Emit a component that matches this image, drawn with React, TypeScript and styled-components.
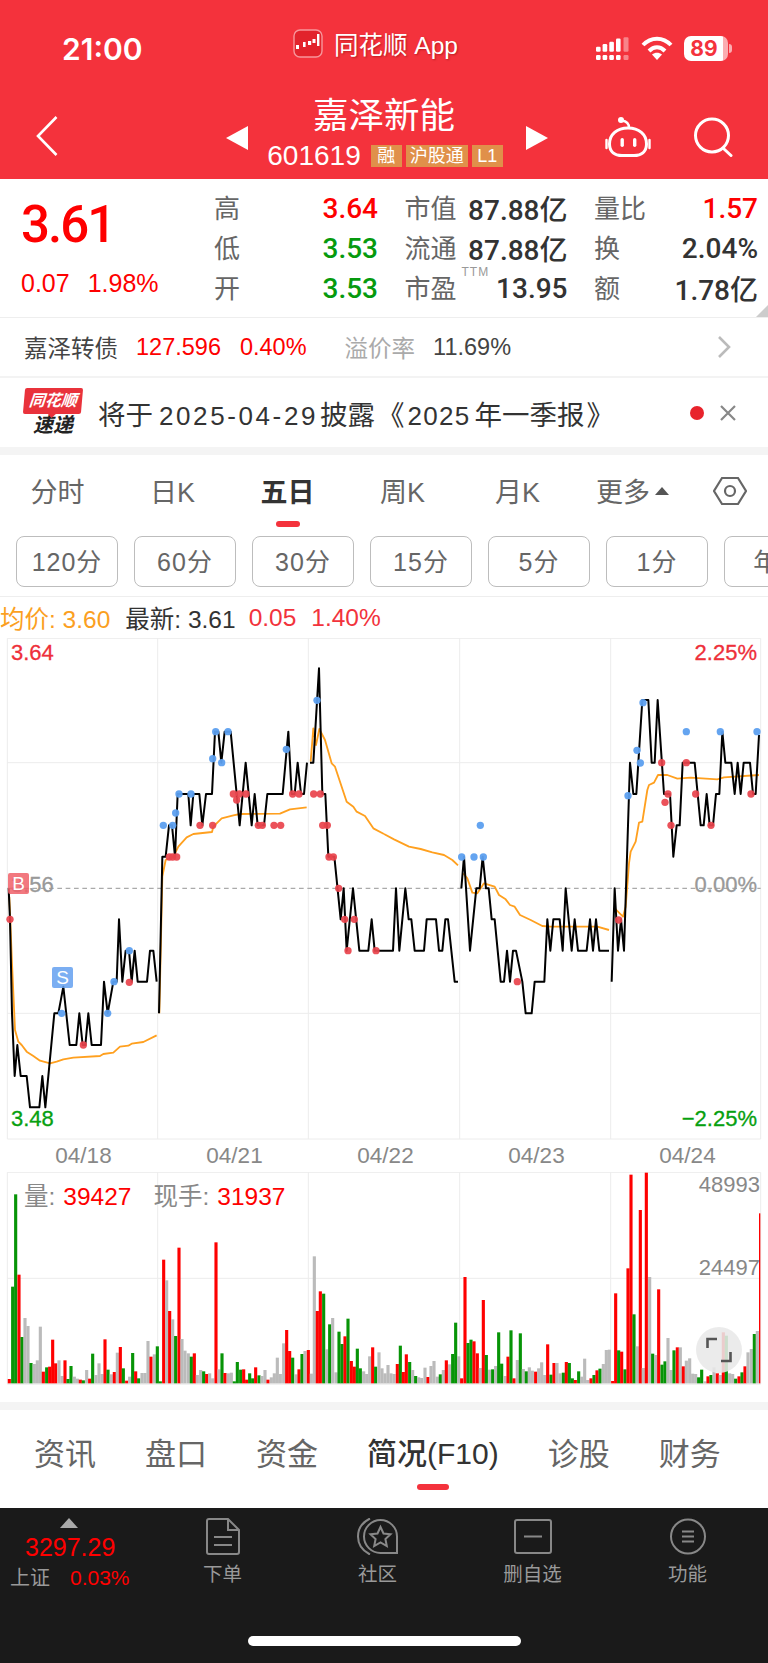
import React from 'react';
import styled, { createGlobalStyle } from 'styled-components';

const RED = '#f4323c';
const UP = '#fe0000';
const DOWN = '#069a0e';
const SANS = '"Liberation Sans", "Noto Sans CJK SC", sans-serif';

const GlobalStyle = createGlobalStyle`
  html, body {
    margin: 0;
    padding: 0;
    background: #fff;
  }
  body {
    font-family: ${SANS};
  }
`;

const Page = styled.div`
  width: 768px;
  height: 1663px;
  overflow: hidden;
  display: flex;
  flex-direction: column;
  background: #fff;
`;

/* ---------- red header ---------- */
const Header = styled.header`
  height: 179px;
  flex: none;
  background: ${RED};
  color: #fff;
  display: flex;
  flex-direction: column;
`;

const StatusBar = styled.div`
  height: 90px;
  display: grid;
  grid-template-columns: 293px 303px 1fr;
  align-items: center;
`;

const Time = styled.div`
  padding: 7px 0 0 62px;
  font-family: Inter, ${SANS};
  font-size: 30px;
  font-weight: 600;
`;

const AppName = styled.div`
  display: flex;
  align-items: center;
  gap: 11px;
  font-size: 24.5px;
  padding-bottom: 4px;
  text-shadow: 1px 1px 2px rgba(120, 0, 0, 0.45);
`;

const StatusIcons = styled.div`
  display: flex;
  align-items: center;
  padding-top: 6px;
`;

const Battery = styled.div`
  position: relative;
  width: 44px;
  height: 25px;
  margin-left: 11px;
  border-radius: 7px;
  background: linear-gradient(90deg, #fff 89%, rgba(255, 255, 255, 0.6) 89%);
  color: ${RED};
  font-family: Inter, ${SANS};
  font-size: 21px;
  font-weight: 700;
  line-height: 25px;
  text-align: center;
  padding-right: 4px;
  box-sizing: border-box;

  &::after {
    content: '';
    position: absolute;
    right: -4px;
    top: 8px;
    width: 3px;
    height: 9px;
    border-radius: 0 3px 3px 0;
    background: rgba(255, 255, 255, 0.6);
  }
`;

const NavRow = styled.div`
  flex: 1;
  display: grid;
  grid-template-columns: 226px 322px 1fr;
  align-items: center;
`;

const BackButton = styled.div`
  padding: 2px 0 0 36px;
  display: flex;
`;

const NavCenter = styled.div`
  display: flex;
  align-items: center;
  justify-content: space-between;
`;

const Arrow = styled.div<{ $dir: 'left' | 'right' }>`
  width: 0;
  height: 0;
  margin-top: 6px;
  border-top: 12px solid transparent;
  border-bottom: 12px solid transparent;
  ${(p) => (p.$dir === 'left' ? 'border-right: 22px solid #fff;' : 'border-left: 22px solid #fff;')}
`;

const TitleBlock = styled.div`
  display: flex;
  flex-direction: column;
  align-items: center;
  margin-right: 4px;
`;

const Title = styled.div`
  font-size: 35.5px;
  line-height: 44px;
  margin: -4px 0 3px -2px;
`;

const CodeRow = styled.div`
  display: flex;
  align-items: center;
  gap: 4px;
  font-size: 28px;
  line-height: 30px;
`;

const Code = styled.span`
  margin-right: 6px;
`;

const Tag = styled.span`
  height: 22px;
  min-width: 31px;
  box-sizing: border-box;
  padding: 0 4px;
  background: #e0904a;
  color: #fff;
  font-size: 18px;
  line-height: 22px;
  text-align: center;
`;

const NavIcons = styled.div`
  display: flex;
  align-items: center;
  gap: 41px;
  padding: 4px 0 0 57px;
`;

/* ---------- quote panel ---------- */
const Quote = styled.section`
  position: relative;
  height: 138px;
  flex: none;
  display: flex;
  border-bottom: 1px solid #eee;
`;

const PriceBox = styled.div`
  width: 214px;
  flex: none;
  padding: 19px 0 0 21px;
  box-sizing: border-box;
  color: ${UP};
`;

const BigPrice = styled.div`
  font-family: Roboto, ${SANS};
  font-size: 51px;
  font-weight: 500;
  line-height: 54px;
  letter-spacing: -2px;
`;

const PriceChange = styled.div`
  display: flex;
  gap: 18px;
  margin-top: 16px;
  font-size: 25px;
  line-height: 30px;
`;

const StatGrid = styled.div`
  flex: 1;
  display: grid;
  grid-template-columns: 164px 163px 164px;
  grid-auto-rows: 40px;
  column-gap: 26.5px;
  padding-top: 9px;
`;

const Stat = styled.div`
  display: flex;
  align-items: center;
  justify-content: space-between;
`;

const StatLabel = styled.span`
  position: relative;
  top: -2px;
  font-size: 26px;
  color: #666;
`;

const Ttm = styled.sup`
  position: absolute;
  left: 57px;
  top: -3px;
  font-size: 12px;
  letter-spacing: 1px;
  color: #999;
`;

const StatValue = styled.span<{ $color?: string }>`
  font-family: Roboto, ${SANS};
  font-weight: 500;
  font-size: 28px;
  color: ${(p) => p.$color || '#333'};
`;

const CornerMark = styled.div`
  position: absolute;
  right: 0;
  bottom: 0;
  width: 0;
  height: 0;
  border-left: 12px solid transparent;
  border-bottom: 12px solid #ccc;
`;

/* ---------- bond + news ---------- */
const BondRow = styled.div`
  height: 58px;
  flex: none;
  display: flex;
  align-items: center;
  padding: 0 37px 0 24px;
  font-size: 23.5px;
  color: #444;
  border-bottom: 2px solid #f3f3f3;
`;

const BondText = styled.span<{ $color?: string; $gap?: number }>`
  color: ${(p) => p.$color || 'inherit'};
  margin-left: ${(p) => p.$gap || 0}px;
`;

const ChevronRight = styled.svg`
  margin-left: auto;
`;

const NewsRow = styled.div`
  height: 69px;
  flex: none;
  display: flex;
  align-items: center;
  padding: 0 31px 0 24px;
  border-bottom: 8px solid #f4f4f4;
`;

const NewsLogo = styled.div`
  width: 58px;
  flex: none;
  display: flex;
  flex-direction: column;
  align-items: center;
`;

const NewsFlag = styled.div`
  position: relative;
  width: 58px;
  height: 26px;
  background: #e9323b;
  border-radius: 2px;
  transform: skewX(-5deg);
  color: #fff;
  font-size: 16px;
  font-weight: 700;
  font-style: italic;
  line-height: 26px;
  text-align: center;

  &::after {
    content: '';
    position: absolute;
    left: 25px;
    bottom: -4px;
    width: 0;
    height: 0;
    border-left: 4px solid transparent;
    border-right: 4px solid transparent;
    border-top: 4px solid #e9323b;
  }
`;

const NewsSub = styled.div`
  font-size: 20px;
  font-weight: 700;
  font-style: italic;
  line-height: 23px;
  color: #222;
`;

const NewsText = styled.div`
  flex: 1;
  display: flex;
  align-items: baseline;
  margin-left: 16px;
  font-size: 27.5px;
  color: #333;
  white-space: nowrap;
`;

const NewsNumber = styled.span<{ $track: number; $left: number; $right: number }>`
  font-size: 26px;
  letter-spacing: ${(p) => p.$track}px;
  margin: 0 ${(p) => p.$right}px 0 ${(p) => p.$left}px;
`;

const NewsBracket = styled.span`
  margin-left: 2px;
`;

const NewsDot = styled.span`
  width: 14px;
  height: 14px;
  margin-right: 15px;
  border-radius: 50%;
  background: #e8232c;
`;

/* ---------- chart tabs ---------- */
const ChartTabs = styled.nav`
  height: 81px;
  flex: none;
  display: grid;
  grid-template-columns: repeat(6, 115px) 1fr;
  align-items: center;
`;

const TabItem = styled.div<{ $active?: boolean }>`
  position: relative;
  display: flex;
  justify-content: center;
  align-items: center;
  gap: 5px;
  padding-bottom: 10px;
  font-size: 27px;
  font-weight: ${(p) => (p.$active ? 700 : 400)};
  color: ${(p) => (p.$active ? '#333' : '#666')};

  ${(p) =>
    p.$active &&
    `&::after {
      content: '';
      position: absolute;
      left: 50%;
      bottom: -7px;
      width: 24px;
      height: 6px;
      margin-left: -12px;
      border-radius: 3px;
      background: ${RED};
    }`}
`;

const MoreCaret = styled.span`
  width: 0;
  height: 0;
  border-left: 7px solid transparent;
  border-right: 7px solid transparent;
  border-bottom: 8px solid #555;
`;

const HexCell = styled.div`
  display: flex;
  padding: 0 0 10px 23px;
`;

const PeriodRow = styled.div`
  height: 61px;
  flex: none;
  display: flex;
  gap: 16px;
  padding-left: 16px;
  overflow: hidden;
  border-bottom: 1px solid #eee;
  box-sizing: border-box;
`;

const PeriodButton = styled.div`
  width: 102px;
  height: 51px;
  flex: none;
  box-sizing: border-box;
  border: 1.5px solid #bdbdbd;
  border-radius: 8px;
  font-size: 25px;
  letter-spacing: 1px;
  line-height: 50px;
  text-align: center;
  color: #666;
`;

const InfoRow = styled.div`
  height: 41px;
  flex: none;
  display: flex;
  align-items: center;
  font-size: 24.5px;
  white-space: nowrap;
`;

const InfoText = styled.span<{ $color: string; $gap?: number }>`
  color: ${(p) => p.$color};
  margin-left: ${(p) => p.$gap || 0}px;
`;

/* ---------- charts ---------- */
const PriceChart = styled.div`
  position: relative;
  height: 502px;
  flex: none;
`;

const ChartSvg = styled.svg`
  display: block;
`;

const ChartLabel = styled.span<{ $y: number; $side: 'left' | 'right'; $color: string }>`
  position: absolute;
  top: ${(p) => p.$y}px;
  ${(p) => (p.$side === 'left' ? 'left: 11px;' : 'right: 11px;')}
  font-size: 22px;
  line-height: 26px;
  -webkit-text-stroke: 0.3px ${(p) => p.$color};
  color: ${(p) => p.$color};
`;

const Marker = styled.span<{ $x: number; $y: number; $bg: string }>`
  position: absolute;
  left: ${(p) => p.$x}px;
  top: ${(p) => p.$y}px;
  width: 21px;
  height: 21px;
  border-radius: 2px;
  background: ${(p) => p.$bg};
  color: #fff;
  font-size: 19px;
  line-height: 21px;
  text-align: center;
`;

const DateRow = styled.div`
  height: 32px;
  flex: none;
  display: grid;
  grid-template-columns: repeat(5, 151px);
  padding-left: 8px;
  align-items: center;
  padding-top: 0;
`;

const DateLabel = styled.span`
  font-size: 22.5px;
  line-height: 26px;
  text-align: center;
  color: #888;
`;

const VolumeChart = styled.div`
  position: relative;
  height: 213px;
  flex: none;
`;

const VolumeLegend = styled.div`
  position: absolute;
  left: 24px;
  top: 11px;
  display: flex;
  font-size: 24.5px;
  line-height: 28px;
  color: #888;
`;

const LegendValue = styled.span`
  color: ${UP};
  margin: 0 22px 0 8px;
`;

const AxisValue = styled.span<{ $y: number }>`
  position: absolute;
  right: 8px;
  top: ${(p) => p.$y}px;
  font-size: 22px;
  line-height: 26px;
  color: #888;
`;

const ExpandButton = styled.div`
  position: absolute;
  left: 696px;
  top: 155px;
  width: 46px;
  height: 46px;
  border-radius: 50%;
  background: rgba(232, 232, 232, 0.88);
  display: flex;
  align-items: center;
  justify-content: center;
`;

/* ---------- bottom tabs + dock ---------- */
const SectionTabs = styled.nav`
  margin-top: 17px;
  height: 106px;
  flex: none;
  box-sizing: border-box;
  border-top: 8px solid #f4f4f4;
  display: flex;
  align-items: center;
  gap: 49px;
  padding: 0 0 16px 34px;
`;

const SectionTab = styled.div<{ $active?: boolean }>`
  position: relative;
  font-size: ${(p) => (p.$active ? 30 : 31)}px;
  font-weight: ${(p) => (p.$active ? 500 : 400)};
  color: ${(p) => (p.$active ? '#333' : '#666')};
  white-space: nowrap;

  ${(p) =>
    p.$active &&
    `&::after {
      content: '';
      position: absolute;
      left: 50%;
      bottom: -17px;
      width: 32px;
      height: 6px;
      margin-left: -16px;
      border-radius: 3px;
      background: ${RED};
    }`}
`;

const Dock = styled.footer`
  position: relative;
  flex: 1;
  background: #1a1a1a;
  display: grid;
  grid-template-columns: 145px repeat(4, 155px);
  grid-template-rows: 82px;
  padding-top: 10px;
`;

const IndexBox = styled.div`
  display: flex;
  flex-direction: column;
  align-items: flex-start;
  padding-left: 10px;
`;

const IndexCaret = styled.span`
  width: 0;
  height: 0;
  margin-left: 50px;
  border-left: 9px solid transparent;
  border-right: 9px solid transparent;
  border-bottom: 10px solid #aaa;
`;

const IndexValue = styled.div`
  margin: 4px 0 0 15px;
  font-size: 25px;
  line-height: 30px;
  color: #f00;
`;

const IndexMeta = styled.div`
  display: flex;
  align-items: center;
  gap: 20px;
  margin-top: 3px;
  font-size: 20px;
  line-height: 26px;
  color: #999;
`;

const IndexPercent = styled.span`
  font-size: 21px;
  color: #f00;
`;

const DockItem = styled.div`
  display: flex;
  flex-direction: column;
  align-items: center;
  gap: 6px;
  color: #999;
  font-size: 19.5px;
  line-height: 26px;
`;

const HomeBar = styled.div`
  position: absolute;
  left: 248px;
  bottom: 17px;
  width: 273px;
  height: 10px;
  border-radius: 5px;
  background: #fff;
`;

/* ---------- chart data, traced in 3x pixels of each half of the page ---------- */
const HALVES = [
  {
    dx: 0,
    price: [
      '26,775 30,870 36,1150 44,1338 52,1245 62,1338 80,1338 90,1432 118,1432 127,1338 136,1432 163,1150 175,1150 190,1070 209,1245 229,1245 238,1150 248,1245 256,1245 265,1150 275,1245 303,1245 312,1055 323,1150 340,1055 350,1055 357,868 367,1055 377,962 387,962 395,1055 404,962 413,1055 441,1055 450,962 460,962 470,1055',
      '477,1150 487,680 497,680 507,586 516,586 525,680 533,492 565,492 572,586 580,492 598,492 607,586 618,492 636,492 645,305 655,305 664,398 674,305 692,305 719,586 737,398 755,586 764,492 773,586 792,586 802,492 848,492 865,305 875,492 884,492 893,398 903,492 912,492 921,398',
      '930,398 940,398 957,115 967,492 976,492 985,680 1003,680 1022,868 1031,775 1040,962 1059,775 1078,962 1105,962 1115,868 1124,962 1152,962',
    ],
    avg: [
      '28,800 36,1000 45,1200 55,1235 65,1245 80,1265 100,1278 120,1292 150,1300 170,1295 190,1288 220,1283 300,1278 310,1272 340,1268 360,1250 385,1247 395,1241 430,1236 470,1216',
      '478,1150 487,740 497,690 520,680 535,650 560,622 580,612 636,606 640,590 665,565 700,556 720,552 840,551 870,538 920,532',
      '932,395 940,295 948,345 958,297 975,330 995,400 1005,410 1040,515 1060,530 1070,545 1095,558 1120,595 1152,612',
    ],
    red: '30,868 250,1245 388,1057 508,681 518,681 530,681 600,586 638,586 700,492 710,510 718,492 738,492 775,586 787,586 822,586 842,586 878,492 897,492 941,492 961,492 968,586 982,586 987,681 1000,681 1016,775 1034,868 1063,868 1044,962 1128,962',
    blue: '185,1150 323,1150 342,1055 388,962 490,586 518,586 527,549 537,492 573,492 638,386 647,305 665,398 684,305 859,358 951,211',
  },
  {
    dx: 1152,
    price: [
      '0,962 27,962 36,775 46,962 64,775 74,868 82,868 92,962 120,962 128,868 156,868 165,962 175,962 184,868 192,868 212,1055 222,1055',
      '232,775 240,680 258,962 277,775 287,775 296,680 306,775 314,775 323,868 332,868 350,1055 360,1055 369,962 378,1055 387,962 396,962 415,1055 425,1150 443,1150 452,1055 481,1055 490,868 499,962 508,868 527,868 536,962 545,775 563,962 572,868 582,962 608,962 618,868 627,962 636,868 646,962 675,962',
      '683,1055 692,775 702,962 711,868 720,962 738,398 748,492 757,492 775,210 793,210 803,398 812,398 821,210 840,492 858,492 868,680 878,586 887,586 896,398 932,398 950,586 959,586 968,492 977,586 987,586 996,492 1006,492 1015,305 1024,398 1042,398 1052,492 1061,398 1070,492 1079,398 1098,398 1107,492 1115,492 1125,315',
    ],
    avg: [
      '0,612 30,628 75,650 110,657 145,667 180,675 205,690 222,706',
      '238,730 250,745 265,788 280,790 300,760 332,770 345,795 365,808 378,825 392,830 408,855 440,870 475,888 500,890 640,890 675,900',
      '692,835 717,860 725,830 735,700 740,665 755,635 765,578 775,575 790,480 795,465 810,458 822,435 850,435 880,446 920,443 1000,448 1020,442 1125,435',
    ],
    red: '400,1055 704,870 833,398 852,492 843,517 861,586 907,398 935,492 981,586 1101,492',
    blue: '233,681 270,681 289,586 298,681 732,497 759,361 769,399 777,218 907,305 1009,305 1119,305',
  },
];

const VOLUME_LEFT =
  '28r657 38g380 47g103 57r344 66g531 75s474 84s498 93g609 103s612 112s601 121s500 130r635 140g622 149r620 158r539 167r610 177s601 186s648 195r601 204g657 213g618 223s650 232s656 241r659 250g661 260s630 269r656 278g581 288s645 297s610 306s642 315r538 324g629 334s643 343r636 352s578 361r561 370g625 380r662 389s650 398g579 407r634 416g655 426s639 435s639 444s543 453r590 463s583 472g559 481g664 491r299 500s361 509r453 518s478 527g528 537r263 546s537 555s572 565s580 574g590 583r580 592s645 602s630 611g634 620r642 629s640 638s655 648r247 657s628 666g580 675r639 685s640 694s638 703g664 712g606 722g629 731r628 740r659 749g640 758g655 767r622 777g646 786s648 795s630 804r659 814s652 823s640 832s593 841s642 851s550 860r510 869r573 878g593 888s643 897r628 906g582 915s573 925r570 934s641 943s289 952r453 961r394 971g401 980s568 989g493 998s474 1008s637 1017g515 1026g552 1035r529 1044g476 1054r603 1063r620 1072g566 1081g625 1091s634 1100s642 1109s589 1118r562 1127g620 1137s577 1146s625';

const VOLUME_RIGHT =
  '3s640 12s615 21s640 30s642 40r612 49g557 58r636 67r583 77g606 86s630 95g648 104s652 113s654 123s623 132r651 141s618 150s603 160s650 169g643 178s630 187r601 197s613 206g582 215g488 224s589 233r655 243r351 252g549 261g539 270r544 280r580 289s624 298r420 307g585 317s629 326g628 335s618 344g517 353g611 363s648 372r590 381g511 390r655 400s600 409g520 418s627 427g634 436s622 445s632 455r635 464s625 473s607 482s645 491r553 501g644 510r609 519s609 528s640 538g638 547r606 556g609 565g655 574r660 584g634 593s650 602s596 611s660 621r655 630g645 639r631 648g626 658s612 667s570 676s569 686r663 695r400 704g571 713r575 723g628 732r325 741r44 750g463 760s559 769r150 778s624 787r38 797s351 806g581 815s585 824r388 834g614 843g604 852s534 861s630 870g571 880r562 889s562 898r619 907s602 917s595 926s641 935s642 944g652 953g629 963s664 972r649 981g645 990s622 1000r640 1009s645 1018r517 1027g527 1037s640 1046s642 1055g656 1065r649 1074g637 1083r619 1092s577 1102s567 1111g522 1120s513';

const BAR_COLORS: Record<string, string> = { r: '#fe0000', g: '#079407', s: '#bbbbbb' };

const parseBars = (data: string, dx: number) =>
  data.split(' ').map((item) => {
    const m = item.match(/^(\d+)([rgs])(\d+)$/)!;
    return { x: Number(m[1]) + dx, color: BAR_COLORS[m[2]], top: Number(m[3]) };
  });

const BARS = [...parseBars(VOLUME_LEFT, 0), ...parseBars(VOLUME_RIGHT, 1152)];

const dots = (data: string) => data.split(' ').map((p) => p.split(',').map(Number));

const FRAME_X = [22, 473, 925, 1379, 1832, 2282];

const PriceSvg = () => (
  <ChartSvg width={768} height={502} viewBox="0 24 2304 1506">
    <g stroke="#ececec" strokeWidth={3}>
      {FRAME_X.map((x) => (
        <line key={x} x1={x} x2={x} y1={25} y2={1527} />
      ))}
      <line x1={22} x2={2282} y1={25} y2={25} />
      <line x1={22} x2={2282} y1={398} y2={398} />
      <line x1={22} x2={2282} y1={1150} y2={1150} />
      <line x1={22} x2={2282} y1={1527} y2={1527} />
    </g>
    <line x1={22} x2={2282} y1={775} y2={775} stroke="#aaa" strokeWidth={4} strokeDasharray="14 11" />
    {HALVES.map((h) => (
      <g key={h.dx} transform={`translate(${h.dx} 0)`} fill="none">
        {h.avg.map((pts) => (
          <polyline key={pts} points={pts} stroke="#ffa01f" strokeWidth={5.5} strokeLinejoin="round" />
        ))}
        {h.price.map((pts) => (
          <polyline key={pts} points={pts} stroke="#000" strokeWidth={6} strokeLinejoin="round" />
        ))}
        {dots(h.red).map(([x, y]) => (
          <circle key={`r${x}-${y}`} cx={x} cy={y} r={11} fill="#e9434c" fillOpacity={0.92} />
        ))}
        {dots(h.blue).map(([x, y]) => (
          <circle key={`b${x}-${y}`} cx={x} cy={y} r={11} fill="#5c9fef" fillOpacity={0.95} />
        ))}
      </g>
    ))}
  </ChartSvg>
);

const VolumeSvg = () => (
  <ChartSvg width={768} height={213} viewBox="0 36 2304 639">
    <g stroke="#ececec" strokeWidth={3}>
      {FRAME_X.map((x) => (
        <line key={x} x1={x} x2={x} y1={37} y2={672} />
      ))}
      <line x1={22} x2={2282} y1={37} y2={37} />
      <line x1={22} x2={2282} y1={355} y2={355} />
      <line x1={22} x2={2282} y1={672} y2={672} strokeWidth={5} />
    </g>
    {BARS.map((b) => (
      <rect key={b.x} x={b.x - 4.7} y={b.top} width={9.4} height={670 - b.top} fill={b.color} />
    ))}
    <rect x={2277} y={160} width={4} height={510} fill="#fe0000" />
  </ChartSvg>
);

const SignalIcon = () => (
  <svg width={34} height={23} viewBox="0 0 34 23">
    <g fill="#fff">
      <rect x={0} y={9.7} width={4.6} height={5} rx={1.2} />
      <rect x={6.6} y={7} width={4.6} height={7.7} rx={1.2} />
      <rect x={13.3} y={4.7} width={4.6} height={10} rx={1.2} />
      <rect x={20} y={1.5} width={4.6} height={13.2} rx={1.2} />
      <rect x={0} y={18} width={4.6} height={5} rx={1.2} />
      <rect x={6.6} y={18} width={4.6} height={5} rx={1.2} />
      <rect x={13.3} y={18} width={4.6} height={5} rx={1.2} />
      <rect x={20} y={18} width={4.6} height={5} rx={1.2} />
    </g>
    <g fill="#fff" fillOpacity={0.4}>
      <rect x={27.5} y={0.3} width={5} height={14.4} rx={1.2} />
      <rect x={27.5} y={18} width={5} height={5} rx={1.2} />
    </g>
  </svg>
);

const WifiIcon = () => (
  <svg width={32} height={24} viewBox="0 0 32 24" style={{ marginLeft: 11 }}>
    <path d="M2 9C10 0.5 22 0.5 30 9" fill="none" stroke="#fff" strokeWidth={4} />
    <path d="M8 15C13 10 19 10 24 15" fill="none" stroke="#fff" strokeWidth={4} />
    <path d="M16 24L11 18.6C14 16 18 16 21 18.6Z" fill="#fff" />
  </svg>
);

const AppLogo = () => (
  <svg width={30} height={29} viewBox="0 0 30 29">
    <rect x={1} y={1} width={28} height={27} rx={6} fill="#e2232c" stroke="#f7969b" strokeWidth={1.4} />
    <g fill="#fff">
      <rect x={3} y={16} width={3} height={4} />
      <rect x={10} y={13} width={2.6} height={5} />
      <rect x={15} y={12} width={3.2} height={4} />
      <rect x={19.5} y={10} width={3} height={4} />
      <rect x={24} y={5} width={2.4} height={12} />
    </g>
  </svg>
);

const RobotIcon = () => (
  <svg width={46} height={42} viewBox="0 0 46 42" fill="none" stroke="#fff" strokeWidth={3}>
    <path d="M23 12C34 12 41.5 18.5 41.5 28C41.5 36 36 39.5 29 39.5H17C10 39.5 4.5 36 4.5 28C4.5 18.5 12 12 23 12Z" />
    <path d="M24 12C24 7 21 5 17 4.5" strokeWidth={2.4} />
    <circle cx={16} cy={4} r={3} fill="#fff" stroke="none" />
    <path d="M1.5 24V32M44.5 24V32" strokeWidth={2.4} strokeLinecap="round" />
    <rect x={15.5} y={22} width={3.4} height={9} rx={1.7} fill="#fff" stroke="none" />
    <rect x={28} y={22} width={3.4} height={9} rx={1.7} fill="#fff" stroke="none" />
  </svg>
);

const App: React.FC = () => (
  <Page>
    <GlobalStyle />
    <Header>
      <StatusBar>
        <Time>21:00</Time>
        <AppName>
          <AppLogo />
          <span>同花顺 App</span>
        </AppName>
        <StatusIcons>
          <SignalIcon />
          <WifiIcon />
          <Battery>89</Battery>
        </StatusIcons>
      </StatusBar>
      <NavRow>
        <BackButton>
          <svg width={22} height={40} viewBox="0 0 22 40" fill="none" stroke="#fff" strokeWidth={2.6}>
            <polyline points="20.5,1 2,20 20.5,39" />
          </svg>
        </BackButton>
        <NavCenter>
          <Arrow $dir="left" />
          <TitleBlock>
            <Title>嘉泽新能</Title>
            <CodeRow>
              <Code>601619</Code>
              <Tag>融</Tag>
              <Tag>沪股通</Tag>
              <Tag>L1</Tag>
            </CodeRow>
          </TitleBlock>
          <Arrow $dir="right" />
        </NavCenter>
        <NavIcons>
          <RobotIcon />
          <svg width={42} height={40} viewBox="0 0 42 40" fill="none" stroke="#fff" strokeWidth={3}>
            <circle cx={20} cy={18.5} r={16.5} />
            <path d="M32 32L39 38.5" strokeLinecap="round" />
          </svg>
        </NavIcons>
      </NavRow>
    </Header>

    <Quote>
      <PriceBox>
        <BigPrice>3.61</BigPrice>
        <PriceChange>
          <span>0.07</span>
          <span>1.98%</span>
        </PriceChange>
      </PriceBox>
      <StatGrid>
        <Stat>
          <StatLabel>高</StatLabel>
          <StatValue $color={UP}>3.64</StatValue>
        </Stat>
        <Stat>
          <StatLabel>市值</StatLabel>
          <StatValue>87.88亿</StatValue>
        </Stat>
        <Stat>
          <StatLabel>量比</StatLabel>
          <StatValue $color={UP}>1.57</StatValue>
        </Stat>
        <Stat>
          <StatLabel>低</StatLabel>
          <StatValue $color={DOWN}>3.53</StatValue>
        </Stat>
        <Stat>
          <StatLabel>流通</StatLabel>
          <StatValue>87.88亿</StatValue>
        </Stat>
        <Stat>
          <StatLabel>换</StatLabel>
          <StatValue>2.04%</StatValue>
        </Stat>
        <Stat>
          <StatLabel>开</StatLabel>
          <StatValue $color={DOWN}>3.53</StatValue>
        </Stat>
        <Stat>
          <StatLabel>
            市盈<Ttm>TTM</Ttm>
          </StatLabel>
          <StatValue>13.95</StatValue>
        </Stat>
        <Stat>
          <StatLabel>额</StatLabel>
          <StatValue>1.78亿</StatValue>
        </Stat>
      </StatGrid>
      <CornerMark />
    </Quote>

    <BondRow>
      <span>嘉泽转债</span>
      <BondText $color={UP} $gap={18}>127.596</BondText>
      <BondText $color={UP} $gap={19}>0.40%</BondText>
      <BondText $color="#aaa" $gap={38}>溢价率</BondText>
      <BondText $gap={18}>11.69%</BondText>
      <ChevronRight width={14} height={22} viewBox="0 0 14 22" fill="none" stroke="#bbb" strokeWidth={2.6}>
        <polyline points="2,1 12,11 2,21" />
      </ChevronRight>
    </BondRow>

    <NewsRow>
      <NewsLogo>
        <NewsFlag>同花顺</NewsFlag>
        <NewsSub>速递</NewsSub>
      </NewsLogo>
      <NewsText>
        <span>将于</span>
        <NewsNumber $track={2.6} $left={6} $right={2}>2025-04-29</NewsNumber>
        <span>披露</span>
        <NewsBracket>《</NewsBracket>
        <NewsNumber $track={1.3} $left={3} $right={4}>2025</NewsNumber>
        <span>年一季报</span>
        <NewsBracket>》</NewsBracket>
      </NewsText>
      <NewsDot />
      <svg width={18} height={18} viewBox="0 0 18 18" stroke="#888" strokeWidth={2.2}>
        <path d="M2 2L16 16M16 2L2 16" />
      </svg>
    </NewsRow>

    <ChartTabs>
      <TabItem>分时</TabItem>
      <TabItem>日K</TabItem>
      <TabItem $active>五日</TabItem>
      <TabItem>周K</TabItem>
      <TabItem>月K</TabItem>
      <TabItem>
        更多
        <MoreCaret />
      </TabItem>
      <HexCell>
        <svg width={34} height={30} viewBox="0 0 34 30" fill="none" stroke="#666" strokeWidth={2.2}>
          <polygon points="9,2 25,2 33,15 25,28 9,28 1,15" />
          <circle cx={17} cy={15} r={5} />
        </svg>
      </HexCell>
    </ChartTabs>

    <PeriodRow>
      {['120分', '60分', '30分', '15分', '5分', '1分', '年K'].map((label) => (
        <PeriodButton key={label}>{label}</PeriodButton>
      ))}
    </PeriodRow>

    <InfoRow>
      <InfoText $color="#fba01f">均价: 3.60</InfoText>
      <InfoText $color="#333" $gap={15}>最新: 3.61</InfoText>
      <InfoText $color="#f2333c" $gap={13}>0.05</InfoText>
      <InfoText $color="#f2333c" $gap={15}>1.40%</InfoText>
    </InfoRow>

    <PriceChart>
      <PriceSvg />
      <ChartLabel $side="left" $y={2} $color="#ee2f3a">3.64</ChartLabel>
      <ChartLabel $side="left" $y={234} $color="#999">3.56</ChartLabel>
      <ChartLabel $side="left" $y={468} $color="#07a00f">3.48</ChartLabel>
      <ChartLabel $side="right" $y={2} $color="#ee2f3a">2.25%</ChartLabel>
      <ChartLabel $side="right" $y={234} $color="#999">0.00%</ChartLabel>
      <ChartLabel $side="right" $y={468} $color="#07a00f">−2.25%</ChartLabel>
      <Marker $x={8} $y={235} $bg="rgba(240, 96, 104, 0.85)">B</Marker>
      <Marker $x={52} $y={329} $bg="rgba(100, 160, 240, 0.85)">S</Marker>
    </PriceChart>

    <DateRow>
      {['04/18', '04/21', '04/22', '04/23', '04/24'].map((d) => (
        <DateLabel key={d}>{d}</DateLabel>
      ))}
    </DateRow>

    <VolumeChart>
      <VolumeSvg />
      <VolumeLegend>
        量:<LegendValue>39427</LegendValue>现手:<LegendValue>31937</LegendValue>
      </VolumeLegend>
      <AxisValue $y={0}>48993</AxisValue>
      <AxisValue $y={83}>24497</AxisValue>
      <ExpandButton>
        <svg width={26} height={26} viewBox="0 0 26 26" fill="none" stroke="#555" strokeWidth={2.6}>
          <path d="M1.5 11V2H11M24.5 15V24H15" />
        </svg>
      </ExpandButton>
    </VolumeChart>

    <SectionTabs>
      <SectionTab>资讯</SectionTab>
      <SectionTab>盘口</SectionTab>
      <SectionTab>资金</SectionTab>
      <SectionTab $active>简况(F10)</SectionTab>
      <SectionTab>诊股</SectionTab>
      <SectionTab>财务</SectionTab>
    </SectionTabs>

    <Dock>
      <IndexBox>
        <IndexCaret />
        <IndexValue>3297.29</IndexValue>
        <IndexMeta>
          上证
          <IndexPercent>0.03%</IndexPercent>
        </IndexMeta>
      </IndexBox>
      <DockItem>
        <svg width={34} height={37} viewBox="0 0 34 37" fill="none" stroke="#888" strokeWidth={2}>
          <path d="M3 1H22L33 12V34A2 2 0 0 1 31 36H3A2 2 0 0 1 1 34V3A2 2 0 0 1 3 1Z" />
          <path d="M22 1V12H33M8 19H26M8 27H26" />
        </svg>
        下单
      </DockItem>
      <DockItem>
        <svg width={42} height={37} viewBox="0 0 42 37" fill="none" stroke="#888" strokeWidth={2}>
          <path d="M13 0.5C4 5 1 12 1 18.5C1 25 4 32 13 36.5" />
          <path d="M23.5 2A16.5 16.5 0 0 1 40 18.5V35H23.5A16.5 16.5 0 0 1 23.5 2Z" />
          <polygon points="23.5,9 26.5,15.5 33.5,16.3 28.4,21 29.8,28 23.5,24.5 17.2,28 18.6,21 13.5,16.3 20.5,15.5" />
        </svg>
        社区
      </DockItem>
      <DockItem>
        <svg width={38} height={37} viewBox="0 0 38 37" fill="none" stroke="#888" strokeWidth={2}>
          <rect x={1} y={2} width={36} height={33} rx={2} />
          <path d="M10 18.5H28" />
        </svg>
        删自选
      </DockItem>
      <DockItem>
        <svg width={36} height={37} viewBox="0 0 36 37" fill="none" stroke="#888" strokeWidth={2}>
          <circle cx={18} cy={18.5} r={17} />
          <path d="M12 13.5H24M12 18.5H24M12 23.5H24" />
        </svg>
        功能
      </DockItem>
      <HomeBar />
    </Dock>
  </Page>
);

export default App;
